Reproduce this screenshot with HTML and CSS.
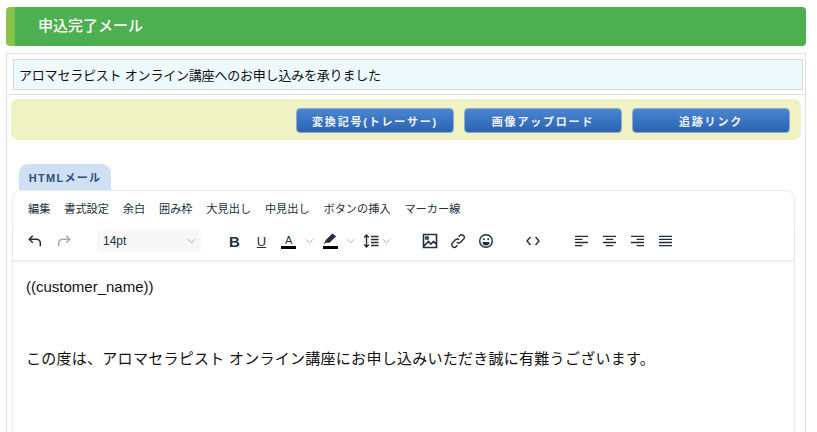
FILE: index.html
```html
<!DOCTYPE html>
<html lang="ja">
<head>
    <meta charset="UTF-8">
    <title>申込完了メール</title>
    <link rel="stylesheet" href="styles.css">
</head>
<body>
    <h2 class="page-title">申込完了メール</h2>

    <div class="panel">
        <div class="subject-row">
            <input class="subject-input" type="text" value="アロマセラピスト オンライン講座へのお申し込みを承りました">
        </div>

        <div class="action-bar">
            <button type="button" class="btn">変換記号(トレーサー)</button>
            <button type="button" class="btn">画像アップロード</button>
            <button type="button" class="btn">追跡リンク</button>
        </div>

        <div class="tab">HTMLメール</div>

        <div class="editor">
            <div class="menubar">
                <span>編集</span>
                <span>書式設定</span>
                <span>余白</span>
                <span>囲み枠</span>
                <span>大見出し</span>
                <span>中見出し</span>
                <span>ボタンの挿入</span>
                <span>マーカー線</span>
            </div>

            <div class="toolbar">
                <svg class="icon undo" viewBox="0 0 18 18"><path d="M6.500 3 2.500 7l4 4M3 7h7.500a4.500 4.500 0 0 1 4.500 4.500V15"/></svg>
                <svg class="icon redo" viewBox="0 0 18 18"><path d="M11.500 3l4 4-4 4M15 7H7.500A4.500 4.500 0 0 0 3 11.500V15"/></svg>

                <div class="size-select">
                    <span>14pt</span>
                    <svg class="chev" viewBox="0 0 10 6"><path d="M1 1l4 4 4-4"/></svg>
                </div>

                <span class="tool-b">B</span>
                <span class="tool-u">U</span>

                <span class="tool-color">
                    <span class="tool-a">A</span>
                    <i class="swatch"></i>
                </span>
                <svg class="chev chev-a" viewBox="0 0 10 6"><path d="M1 1l4 4 4-4"/></svg>

                <span class="tool-color tool-marker">
                    <svg class="marker" viewBox="0 0 16 12"><path d="M1 11l2-4 7-7 4 3-7 7-4 0-1 1z"/></svg>
                    <i class="swatch"></i>
                </span>
                <svg class="chev chev-m" viewBox="0 0 10 6"><path d="M1 1l4 4 4-4"/></svg>

                <svg class="icon line-height" viewBox="0 0 16 16"><path d="M3.500 2v12M1.200 4.500 3.500 2l2.300 2.500M1.200 11.500 3.500 14l2.300-2.500M8 3.500h7.500M8 6.500h7.500M8 9.500h7.500M8 12.500h7.500"/></svg>
                <svg class="chev chev-l" viewBox="0 0 10 6"><path d="M1 1l4 4 4-4"/></svg>

                <svg class="icon image" viewBox="0 0 16 16"><path d="M1.500 1.500h13v13h-13zM2 13l4.500-4.500L9 11l2.500-2.500 3 3"/><circle cx="5" cy="5" r="1.300"/></svg>
                <svg class="icon link" viewBox="0 0 16 16"><path d="M6.800 9.200a2.600 2.600 0 0 0 3.700 0l3-3a2.600 2.600 0 0 0-3.700-3.700L8.600 3.700M9.200 6.800a2.600 2.600 0 0 0-3.700 0l-3 3a2.600 2.600 0 0 0 3.700 3.700l1.200-1.200"/></svg>
                <svg class="icon smile" viewBox="0 0 16 16"><circle cx="8" cy="8" r="6.300"/><circle class="dot" cx="5.800" cy="6.300" r="1"/><circle class="dot" cx="10.200" cy="6.300" r="1"/><path class="dot" d="M4.500 9h7a3.500 3.500 0 0 1-7 0z"/></svg>

                <svg class="icon code" viewBox="0 0 14 10"><path d="M4.500 1 1 5l3.500 4M9.500 1 13 5 9.500 9"/></svg>

                <svg class="icon align" viewBox="0 0 14 12"><path d="M0 1h14M0 4.300h8M0 7.600h14M0 10.900h8"/></svg>
                <svg class="icon align" viewBox="0 0 14 12"><path d="M0 1h14M3 4.300h8M0 7.600h14M3 10.900h8"/></svg>
                <svg class="icon align" viewBox="0 0 14 12"><path d="M0 1h14M6 4.300h8M0 7.600h14M6 10.900h8"/></svg>
                <svg class="icon align" viewBox="0 0 14 12"><path d="M0 1h14M0 4.300h14M0 7.600h14M0 10.900h14"/></svg>
            </div>

            <div class="editor-body">
                <p>((customer_name))</p>
                <p class="blank">&nbsp;</p>
                <p class="body-ja">この度は、アロマセラピスト オンライン講座にお申し込みいただき誠に有難うございます。</p>
            </div>
        </div>
    </div>
</body>
</html>
```

FILE: styles.css
```css
* { margin: 0; padding: 0; box-sizing: border-box; }
html, body { height: 432px; overflow: hidden; }
body {
    background: #fff;
    padding: 7px 11px 0 6px;
    font-family: "Liberation Sans", "Noto Sans CJK JP", sans-serif;
    color: #111;
}

.page-title {
    height: 39px;
    line-height: 38px;
    padding-left: 23px;
    background: #4caf50;
    border-left: 9px solid #8bc34a;
    border-radius: 4px;
    color: #fff;
    font-size: 15px;
    font-weight: 500;
}

.panel {
    height: 380px;
    margin-top: 7px;
    border: 1px solid #dfdfe8;
    border-bottom: none;
}

.subject-row {
    padding: 5px 2px 4px 6px;
    border-bottom: 1px solid #dfdfe8;
}
.subject-input {
    display: block;
    width: 100%;
    height: 31px;
    padding: 0 5px;
    background: #eef9fe;
    border: 1px solid #d8d8e0;
    font-family: inherit;
    font-size: 13px;
    letter-spacing: -0.2px;
    color: #111;
}

.action-bar {
    display: flex;
    justify-content: flex-end;
    gap: 10px;
    height: 41px;
    margin: 4px 4px 0;
    padding: 9px 11px 0 0;
    background: #eff3c4;
    border-radius: 7px;
}
.btn {
    width: 158px;
    height: 25px;
    background: linear-gradient(#4a86d0, #2b63b3);
    border: 1px solid #8fa9cf;
    border-radius: 4px;
    color: #f2f5fb;
    font-family: inherit;
    font-size: 11px;
    font-weight: 700;
    letter-spacing: 1.8px;
}

.tab {
    width: 92px;
    height: 27px;
    margin: 24px 0 0 12px;
    padding-top: 5px;
    background: #cfe0f5;
    border-radius: 9px 9px 0 0;
    color: #2c4f78;
    font-size: 11px;
    font-weight: 700;
    letter-spacing: 1.3px;
    text-align: center;
}

.editor {
    position: relative;
    height: 260px;
    margin: -1px 10px 0 5px;
    background: #fff;
    border: 1px solid #eaeaea;
    border-bottom: none;
    border-radius: 9px 9px 0 0;
}

.menubar {
    display: flex;
    gap: 13.8px;
    height: 35px;
    padding: 11px 0 0 15px;
    font-size: 11.2px;
    line-height: 15px;
    color: #222f3e;
}

.toolbar {
    display: flex;
    align-items: center;
    height: 35px;
    padding: 0 0 4px 14px;
    border-bottom: 1px solid #e8e8e8;
    box-shadow: 0 2px 3px rgba(0, 0, 0, 0.05);
}
.icon {
    flex: none;
    width: 16px;
    height: 16px;
    fill: none;
    stroke: #222f3e;
    stroke-width: 1.4;
}
.undo { stroke-width: 1.7; }
.redo { margin-left: 13px; stroke: #a6abb2; stroke-width: 1.7; }

.size-select {
    display: flex;
    align-items: center;
    justify-content: space-between;
    width: 104px;
    height: 22px;
    margin-left: 25px;
    padding: 0 5px 0 6px;
    background: #f7f7f7;
    border-radius: 3px;
    font-size: 12px;
    color: #222f3e;
}
.chev {
    flex: none;
    width: 9px;
    height: 6px;
    fill: none;
    stroke: #9ca3ab;
    stroke-width: 1;
}

.tool-b {
    margin-left: 28px;
    font-size: 15px;
    font-weight: 700;
    color: #222f3e;
}
.tool-u {
    margin-left: 17px;
    font-size: 13px;
    font-weight: 500;
    color: #222f3e;
    text-decoration: underline;
}

.tool-color {
    display: flex;
    flex-direction: column;
    align-items: center;
    justify-content: flex-end;
    width: 15px;
    height: 16px;
    margin-left: 15px;
}
.tool-a {
    font-size: 11px;
    line-height: 12px;
    font-weight: 500;
    color: #222f3e;
}
.swatch {
    display: block;
    width: 15px;
    height: 3px;
    background: #000;
}
.chev-a { margin-left: 9px; }
.tool-marker { margin-left: 9px; }
.marker {
    width: 15px;
    height: 12px;
    margin-bottom: 1px;
    fill: #222f3e;
}
.chev-m { margin-left: 8px; }
.line-height { margin-left: 8px; }
.chev-l { margin-left: 3px; }

.image { margin-left: 31px; stroke-width: 1.6; }
.link { margin-left: 12px; }
.smile { margin-left: 12px; }
.smile .dot { fill: #222f3e; stroke: none; }
.code { margin-left: 32px; width: 14px; height: 10px; }
.align {
    width: 13px;
    height: 12px;
    margin-left: 15px;
    stroke-width: 1.4;
}
.code + .align { margin-left: 35px; }

.editor-body {
    padding: 16px 13px 0;
    font-size: 15px;
    line-height: 20px;
    color: #111;
}
.blank { height: 52px; }
.body-ja { letter-spacing: 0.27px; }
```
